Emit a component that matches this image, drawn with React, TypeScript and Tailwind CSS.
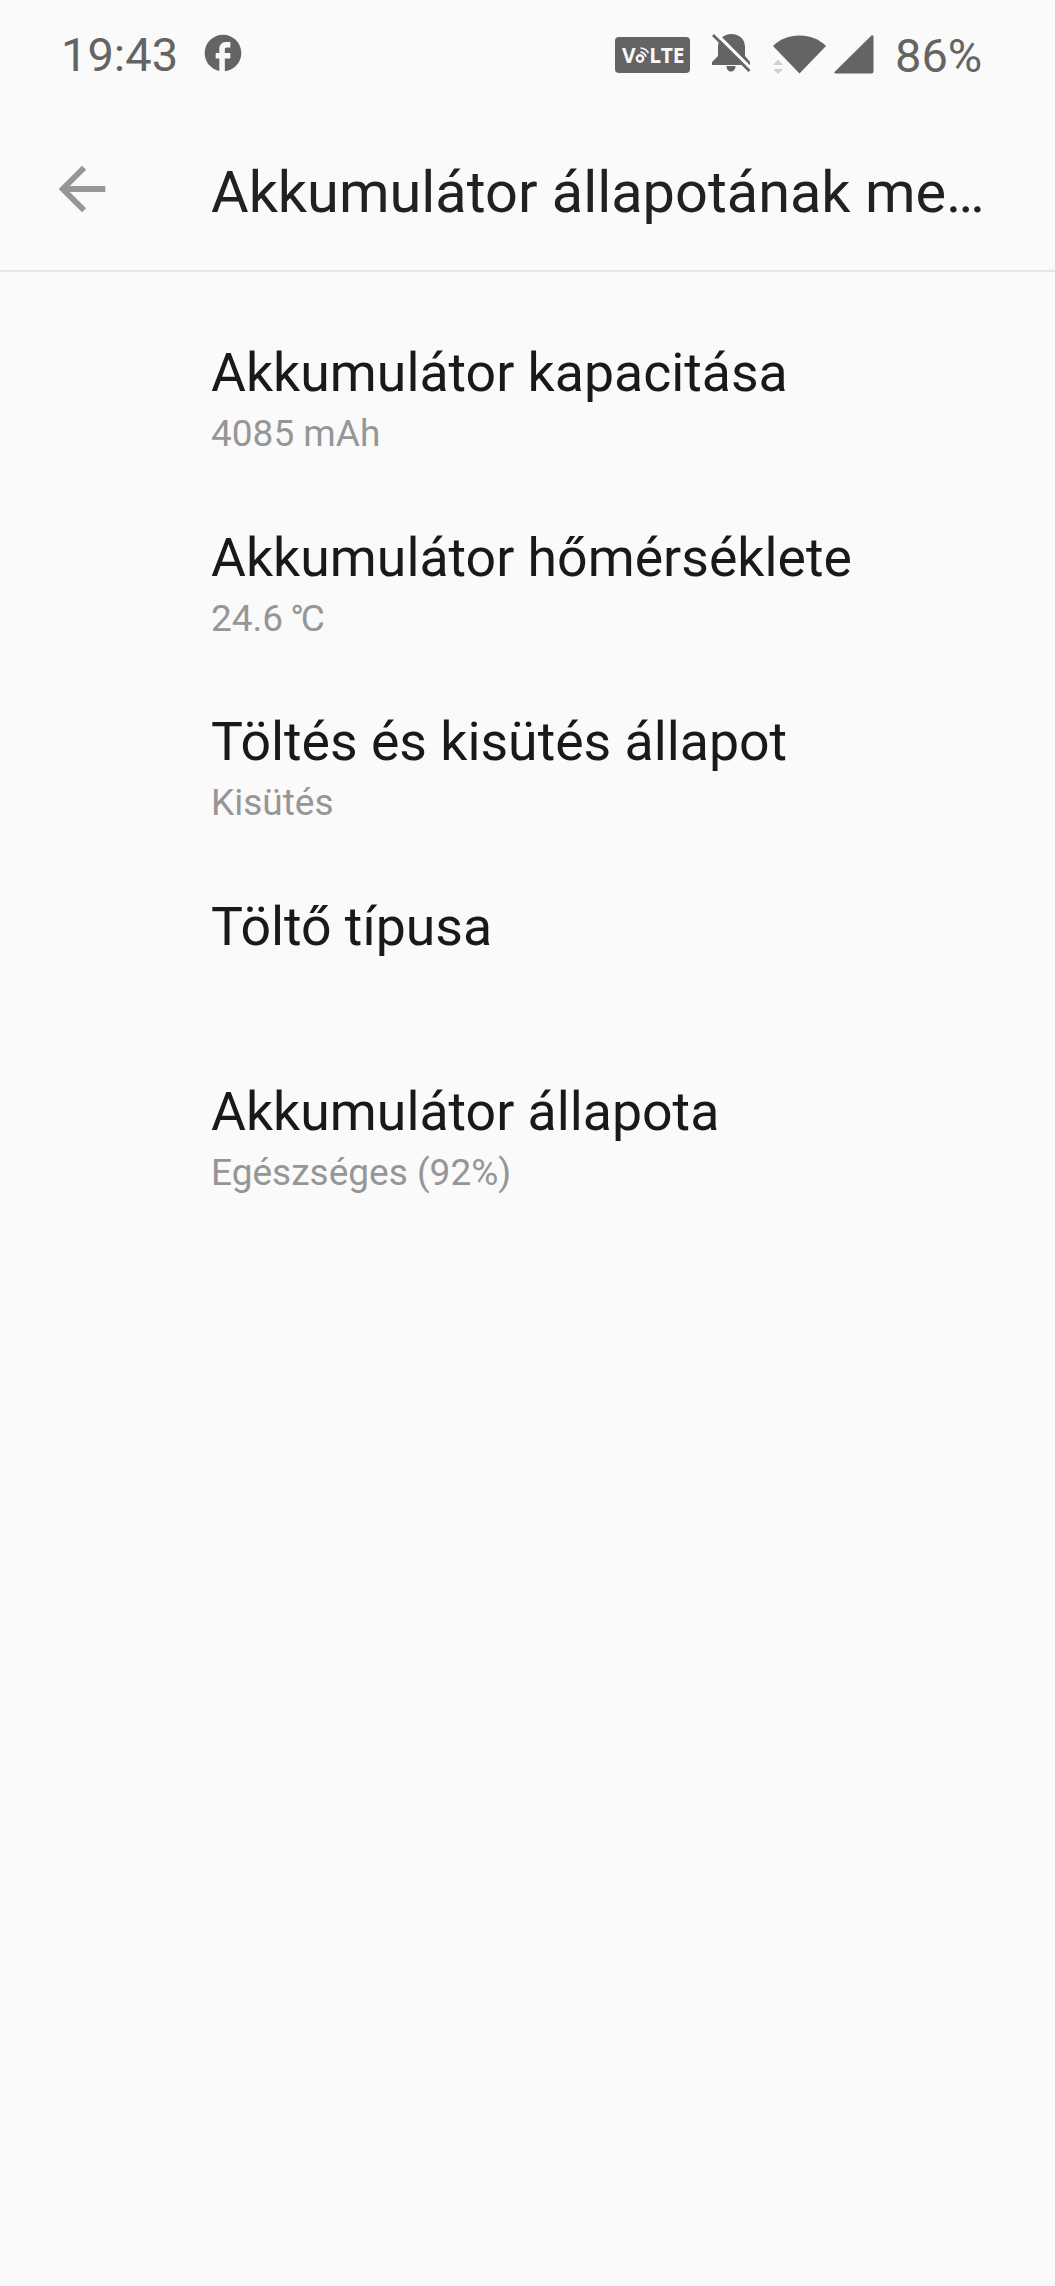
import { MdArrowBack, MdFacebook } from 'react-icons/md'

type BatteryItem = {
  id: string
  title: string
  summary?: string
  unit?: string
}

const items: BatteryItem[] = [
  { id: 'capacity', title: 'Akkumulátor kapacitása', summary: '4085 mAh' },
  { id: 'temperature', title: 'Akkumulátor hőmérséklete', summary: '24.6 ', unit: '°C' },
  { id: 'charging', title: 'Töltés és kisütés állapot', summary: 'Kisütés' },
  { id: 'charger', title: 'Töltő típusa' },
  { id: 'health', title: 'Akkumulátor állapota', summary: 'Egészséges (92%)' },
]

function VolteBadge() {
  return (
    <div className="mt-[37px] ml-[439px] flex h-9 w-[75px] items-center rounded-[4px] bg-[#646464] pl-[7px] font-['Open_Sans'] text-[21px] leading-none font-bold text-[#fafafa]">
      <span>V</span>
      <svg className="-mt-px -ml-px h-[22px] w-4 shrink-0" viewBox="0 0 16 22" fill="none" stroke="currentColor">
        <circle cx="5" cy="14.500" r="3.200" strokeWidth="2.400" />
        <path d="M5.500 7.800a7 7 0 0 1 5.500 5M5.500 4a10 10 0 0 1 8 5" strokeWidth="1.700" />
      </svg>
      <span className="-ml-[1.5px] tracking-[-0.2px]">LTE</span>
    </div>
  )
}

function BellOffIcon() {
  return (
    <svg className="mt-[34px] ml-[22px] h-[38px] w-[39px]" viewBox="0 0 39 38">
      <path
        fill="currentColor"
        d="M0 31v-3l6-6V13C6 5 12 0 19.500 0S33 5 33 13v9l5 6v3zM14.500 32h9c0 3.500-2 5.500-4.500 5.500S14.500 35.500 14.500 32z"
      />
      <path d="M3.200-1.200l37 37" stroke="#fafafa" strokeWidth="3.400" />
      <path d="M1 1l36.500 36" stroke="currentColor" strokeWidth="2.800" />
    </svg>
  )
}

function StatusBar() {
  return (
    <div className="flex h-[106px] items-start text-[#646464]">
      <span className="mt-7 ml-[61px] w-[140px] text-[47px] leading-[54px]">19:43</span>
      <MdFacebook className="mt-[31px] h-11 w-11 shrink-0" />
      <div className="flex -ml-[69px] items-start">
        <VolteBadge />
        <BellOffIcon />
        {/* wifi with data activity arrows */}
        <svg className="mt-[34px] ml-[22px] h-10 w-[54px]" viewBox="0 0 54 40">
          <path fill="currentColor" d="M0 12C7 5 16 1.500 26.500 1.500S46 5 53 12L26.500 39.500z" />
          <path fill="#cfcfcf" d="M0 31l5-5.500 5 5.500zM0 35h10l-5 5z" />
        </svg>
        <svg className="mt-[34px] ml-[7px] h-10 w-10" viewBox="0 0 40 40">
          <path fill="currentColor" d="M37.500 1.500Q39.500.5 39.500 3v34.500q0 2-2 2H2q-3 0-1-2z" />
        </svg>
      </div>
      <span className="mt-[29px] ml-[21px] text-[47px] leading-[54px]">86%</span>
    </div>
  )
}

export default function App() {
  return (
    <main className="h-[2286px] w-[1055px] overflow-hidden bg-[#fafafa] font-[Roboto,sans-serif]">
      <StatusBar />

      <header className="flex h-[166px] items-start border-b-2 border-[#e6e6e6]">
        <button type="button" aria-label="Vissza" className="mt-12 ml-[47px] text-[#969696]">
          <MdArrowBack className="h-[70px] w-[70px]" />
        </button>
        <h1 className="mt-[50px] ml-[94px] w-[800px] truncate text-[57.7px] leading-[72px] text-[#212121]">
          Akkumulátor állapotának me…
        </h1>
      </header>

      <ul className="mt-[69px]">
        {items.map(item => (
          <li key={item.id} className="h-[184.7px] pl-[211px]">
            <h2 className="text-[53.6px] leading-[64px] text-[#191919]">{item.title}</h2>
            {item.summary && (
              <p className="mt-[5px] text-[37px] leading-[48px] text-[#969696]">
                {item.summary}
                {item.unit && <span className="-ml-0.5 tracking-[-3.5px]">{item.unit}</span>}
              </p>
            )}
          </li>
        ))}
      </ul>
    </main>
  )
}
